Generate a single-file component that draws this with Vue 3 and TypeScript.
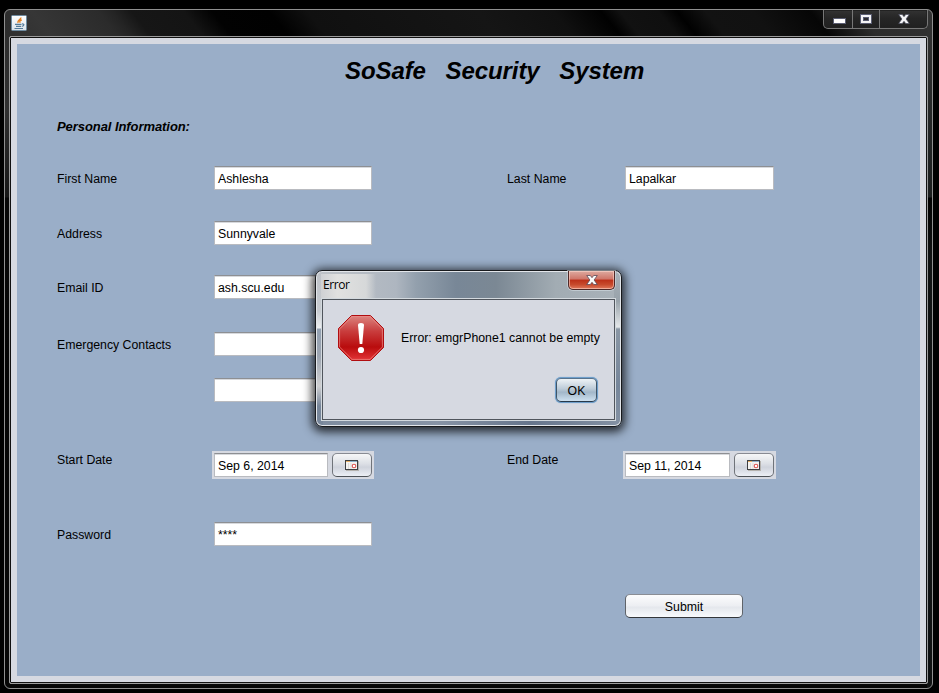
<script setup lang="ts">
import { ref } from 'vue'

const title = 'SoSafe\u00a0\u00a0 Security\u00a0\u00a0 System'
const firstName = ref('Ashlesha')
const lastName = ref('Lapalkar')
const address = ref('Sunnyvale')
const email = ref('ash.scu.edu')
const startDate = ref('Sep 6, 2014')
const endDate = ref('Sep 11, 2014')
const password = ref('****')
</script>

<template>
  <div class="desktop">
    <div class="window">
      <header class="titlebar">
        <svg class="java" viewBox="0 0 16 16" width="16" height="16">
          <defs>
            <linearGradient id="tile" x1="0" y1="0" x2="0" y2="1">
              <stop offset="0" stop-color="#ffffff" />
              <stop offset="1" stop-color="#d9e2ea" />
            </linearGradient>
          </defs>
          <rect x=".5" y=".5" width="15" height="15" rx="1" fill="url(#tile)" stroke="#6e8ba0" />
          <path d="M9.8 2.5 C10.5 4.5 6 5 7 8 M10.8 5 C8.5 5.6 8.5 6.3 9.2 7.8" fill="none" stroke="#e5801f" stroke-width="1.4" />
          <path d="M4 9.4 H10.5 M5 11.4 H10 M3.5 13.5 H12 M11 9 C14 8.6 13 11.2 10.8 11.3" fill="none" stroke="#547b99" stroke-width="1.2" />
        </svg>
        <div class="controls">
          <span class="ctl min">
            <svg width="13" height="6" viewBox="0 0 13 6"><rect x=".5" y=".5" width="12" height="5" fill="#fff" stroke="#5a5d72" /></svg>
          </span>
          <span class="ctl max">
            <svg width="12" height="10" viewBox="0 0 12 10">
              <rect x=".5" y=".5" width="11" height="9" fill="#f4f4f6" stroke="#5a5d72" />
              <rect x="3.5" y="3.5" width="5" height="3" fill="#2b2b2e" stroke="#5a5d72" />
            </svg>
          </span>
          <span class="ctl cls">
            <svg width="12" height="10" viewBox="0 0 12 10">
              <path d="M.7 .5 H4.3 L6 2.7 L7.7 .5 H11.3 L8.1 5 L11.3 9.5 H7.7 L6 7.3 L4.3 9.5 H.7 L3.9 5 Z" fill="#f4f4f6" stroke="#4a4d60" stroke-width=".7" />
            </svg>
          </span>
        </div>
      </header>
      <div class="client">
        <main class="panel">
          <h1>{{ title }}</h1>
          <h2>Personal Information:</h2>
          <div class="form">
            <label>First Name</label>
            <div class="field">{{ firstName }}</div>
            <label>Last Name</label>
            <div class="field narrow">{{ lastName }}</div>

            <label>Address</label>
            <div class="field wide">{{ address }}</div>

            <label>Email ID</label>
            <div class="field wide">{{ email }}</div>

            <label>Emergency Contacts</label>
            <div class="field wide"></div>

            <div class="field wide"></div>

            <label class="date-label">Start Date</label>
            <div class="date">
              <div class="field date-start">{{ startDate }}</div>
              <div class="btn cal">
                <svg width="14" height="11" viewBox="0 0 14 11">
                  <rect x="1" y="1" width="13" height="10" fill="#b5b2ae" />
                  <rect x=".5" y=".5" width="12" height="9" fill="#f5f3f0" stroke="#3d3f42" />
                  <path d="M1 1.5H5" stroke="#e8b065" /><path d="M5 1.5H12" stroke="#8db0c9" />
                  <path d="M3.5 3V9M6 3V9" stroke="#dddcdb" />
                  <circle cx="9" cy="6" r="1.8" fill="#fff" stroke="#dc5552" stroke-width="1.1" />
                </svg>
              </div>
            </div>
            <label class="date-label">End Date</label>
            <div class="date">
              <div class="field date-end">{{ endDate }}</div>
              <div class="btn cal">
                <svg width="14" height="11" viewBox="0 0 14 11">
                  <rect x="1" y="1" width="13" height="10" fill="#b5b2ae" />
                  <rect x=".5" y=".5" width="12" height="9" fill="#f5f3f0" stroke="#3d3f42" />
                  <path d="M1 1.5H5" stroke="#e8b065" /><path d="M5 1.5H12" stroke="#8db0c9" />
                  <path d="M3.5 3V9M6 3V9" stroke="#dddcdb" />
                  <circle cx="9" cy="6" r="1.8" fill="#fff" stroke="#dc5552" stroke-width="1.1" />
                </svg>
              </div>
            </div>

            <label>Password</label>
            <div class="field wide">{{ password }}</div>

            <div class="btn submit">Submit</div>
          </div>
        </main>
      </div>
    </div>

    <div class="dialog">
      <div class="dialog-bar">
        <span class="dialog-title">Error</span>
        <span class="dialog-close">
          <svg width="12" height="10" viewBox="0 0 12 10">
            <path d="M.7 .5 H4.3 L6 2.7 L7.7 .5 H11.3 L8.1 5 L11.3 9.5 H7.7 L6 7.3 L4.3 9.5 H.7 L3.9 5 Z" fill="#fafafa" stroke="#5a4a58" stroke-width=".8" />
          </svg>
        </span>
      </div>
      <div class="dialog-body">
        <div class="message">
          <svg class="stop" width="46" height="46" viewBox="0 0 46 46">
            <defs>
              <linearGradient id="stop" x1="0" y1="0" x2="0" y2="1">
                <stop offset="0" stop-color="#dc8580" />
                <stop offset=".35" stop-color="#c93d3d" />
                <stop offset=".7" stop-color="#b90c0d" />
                <stop offset="1" stop-color="#e43638" />
              </linearGradient>
            </defs>
            <path d="M13.5 .5 H32.5 L45.5 13.5 V32.5 L32.5 45.5 H13.5 L.5 32.5 V13.5 Z" fill="url(#stop)" stroke="#b00d10" />
            <path d="M14 1.6 H32 L44.4 14 V32 L32 44.4 H14 L1.6 32 V14 Z" fill="none" stroke="#ee8d88" stroke-opacity=".7" />
            <path d="M20 10 Q20 8 23 8 Q26 8 26 10 L24.3 29 H21.7 Z" fill="#fff" />
            <circle cx="23" cy="35" r="3.1" fill="#fff" />
          </svg>
          <p>Error: emgrPhone1 cannot be empty</p>
        </div>
        <div class="btn ok">OK</div>
      </div>
    </div>
  </div>
</template>

<style>
body {
  background: #000;
}
</style>

<style scoped>
.desktop {
  box-sizing: border-box;
  width: 939px;
  height: 693px;
  padding: 9px 0 0 4px;
  overflow: hidden;
  background: #000;
  color: #000;
  font: 12.3px 'Liberation Sans', Arial, sans-serif;
  position: relative;
}

.window {
  box-sizing: border-box;
  width: 929px;
  height: 680px;
  padding: 0 4px 4px;
  border: 1px solid #8f8f8f;
  border-radius: 6px;
  background:
    linear-gradient(#2d2d2d, #303030 100px, #161616 187px, #050505 188px, #060606) left / 5px 100% no-repeat,
    linear-gradient(#343434, #1c1f1f 187px, #020202 188px, #121414 250px, #101212) right / 5px 100% no-repeat,
    linear-gradient(51deg, #2f2f2f 0, #363636 5%, #2b2b2b 12%, #242424 13.5%, #161616 15.5%, #141414 21%, #020202 24%, #010101 30%, #101010 34%, #151515 52%, #101010 60%, #010101 65%, #111 67%, #0f0f0f 71%, #010101 73%, #121212 76%, #111 81%, #060606 87%, #2c2c2c 92%, #323232 100%) 0 0 / 100% 27px no-repeat,
    #050505;
}

.titlebar {
  display: flex;
  justify-content: space-between;
  height: 26px;
}

.java {
  margin: 5px 0 0 2px;
}

.controls {
  display: flex;
  box-sizing: border-box;
  width: 105px;
  height: 19px;
  border: 1px solid #777;
  border-top: 0;
  border-radius: 0 0 5px 5px;
  background: linear-gradient(#333, #262626 8px, #202020);
  box-shadow: inset 0 0 0 1px #222;
}

.ctl {
  display: flex;
  box-sizing: border-box;
  align-items: center;
  justify-content: center;
}

.min {
  width: 29px;
  padding: 3px 0 0 2px;
  border-right: 1px solid #777;
}

.max {
  width: 27px;
  padding-bottom: 1px;
  border-right: 1px solid #777;
}

.cls {
  flex: 1;
  padding-bottom: 1px;
}

.client {
  box-sizing: border-box;
  width: 919px;
  height: 648px;
  padding: 7px;
  border: 1px solid #9b9b9b;
  border-radius: 2px;
  outline: 1px solid #101010;
  outline-offset: -2px;
  background: #d6d9e1;
}

.panel {
  box-sizing: border-box;
  height: 632px;
  padding-left: 40px;
  background: #9aaec8;
}

h1 {
  margin: 0;
  padding: 13px 0 0 288px;
  font-size: 24px;
  font-style: italic;
  line-height: 28px;
  letter-spacing: -0.09px;
  white-space: nowrap;
}

h2 {
  margin: 32px 0 0;
  font-size: 13px;
  font-style: italic;
  line-height: 20px;
  letter-spacing: -0.07px;
}

.form {
  display: grid;
  grid-template-columns: 157px 293px 118px 1fr;
  grid-template-rows: 55px 54px 57px 46px 73px 71px 72px 24px;
  align-items: start;
  margin-top: 29px;
}

label {
  line-height: 26px;
}

.field {
  box-sizing: border-box;
  width: 158px;
  height: 24px;
  padding-left: 3px;
  border: 1px solid #b9bbc0;
  border-top-color: #8d8f93;
  background: #fff;
  box-shadow: inset 0 1px #d7d9dd;
  line-height: 24px;
  white-space: nowrap;
}

.wide {
  grid-column: 2 / 5;
}

.narrow {
  width: 149px;
}

.date-label {
  line-height: 18px;
}

.date {
  display: flex;
  gap: 4px;
  width: max-content;
  margin-left: -2px;
  padding: 2px;
  background: #d6d9e1;
}

.date-start {
  width: 114px;
}

.date-end {
  width: 105px;
}

.btn {
  display: flex;
  box-sizing: border-box;
  align-items: center;
  justify-content: center;
  height: 24px;
  border: 1px solid #5f6369;
  border-top-color: #8a8d94;
  border-bottom-color: #33363a;
  border-radius: 5px;
  background: linear-gradient(#fcfcfd, #eceef2 50%, #e4e7ec 55%, #f8fafd);
}

.cal {
  width: 40px;
  border-color: #888b93 #70747a #4e5257;
  background: linear-gradient(#f6f7f8, #dcdfe5 45%, #cfd3dc 60%, #eceff5);
}

.submit {
  grid-column: 4;
  width: 118px;
  padding-top: 2px;
}

.dialog {
  position: absolute;
  left: 315px;
  top: 270px;
  box-sizing: border-box;
  width: 307px;
  height: 157px;
  padding: 0 5px 5px;
  border: 1px solid #17191c;
  border-radius: 7px;
  background:
    linear-gradient(#aeb5bd00, #c7cbd0 40px, #eceef0 57px, #93a1b2 58px, #9da5b1 85px, #cfcfd0 115px, #77869a 135px) left / 7px 100% no-repeat,
    linear-gradient(#a5afb600, #98a2aa 30px, #e4e7e9 56px, #8a97a5 58px, #76869a 115px, #8491a3) right / 7px 100% no-repeat,
    linear-gradient(90deg, #7e8c9f, #8793a5 40%, #66758c 70%, #8491a3) bottom / 100% 7px no-repeat,
    linear-gradient(90deg, #bfc3c8, #aeb6c0 80px, #93a0ad 100px, #788797 140px, #7b8894 180px, #a2acb3 240px, #a9b2b9);
  box-shadow:
    inset 0 0 0 1px #e3e6ea,
    0 2px 10px 3px rgba(0, 0, 0, 0.75);
}

.dialog-bar {
  display: flex;
  justify-content: space-between;
  height: 27px;
}

.dialog-title {
  width: 53px;
  margin-top: 3px;
  padding-left: 2px;
  background: linear-gradient(90deg, #cfd1d4, #e1e1e0 30%, #d6d8d9 82%, transparent);
  font: 12px/22px 'Open Sans', 'Noto Sans', sans-serif;
  letter-spacing: -0.45px;
}

.dialog-close {
  display: flex;
  box-sizing: border-box;
  align-items: center;
  justify-content: center;
  width: 47px;
  height: 19px;
  margin-right: 1px;
  padding-bottom: 1px;
  border: 1px solid #4e2827;
  border-top: 0;
  border-radius: 0 0 5px 5px;
  background: linear-gradient(#deaaa0, #cf7568 45%, #bc3019 50%, #c74a2c 75%, #e0785c);
  box-shadow:
    inset 0 0 0 1px rgba(255, 220, 210, 0.55),
    0 0 0 1px rgba(220, 230, 235, 0.5);
}

.dialog-body {
  display: flex;
  box-sizing: border-box;
  flex-direction: column;
  align-items: flex-end;
  justify-content: space-between;
  width: 293px;
  height: 121px;
  margin: 1px 0 0 1px;
  padding: 15px 17px 17px 15px;
  border: 1px solid #50555c;
  outline: 1px solid #d3d9de;
  background: #d6d9e1;
}

.message {
  display: flex;
  width: 100%;
  gap: 17px;
}

.stop {
  flex-shrink: 0;
}

.message p {
  margin: 15px 0 0;
  line-height: 16px;
  white-space: nowrap;
}

.ok {
  width: 41px;
  padding-top: 2px;
  border-color: #58738d #3f5568 #26394a;
  background: linear-gradient(#eef3f6, #bccbd8 45%, #a2b7c9 60%, #cde0ef);
  box-shadow: 0 0 0 1px #6f9fcb, 0 0 1px 1px #6f9fcb;
}
</style>
